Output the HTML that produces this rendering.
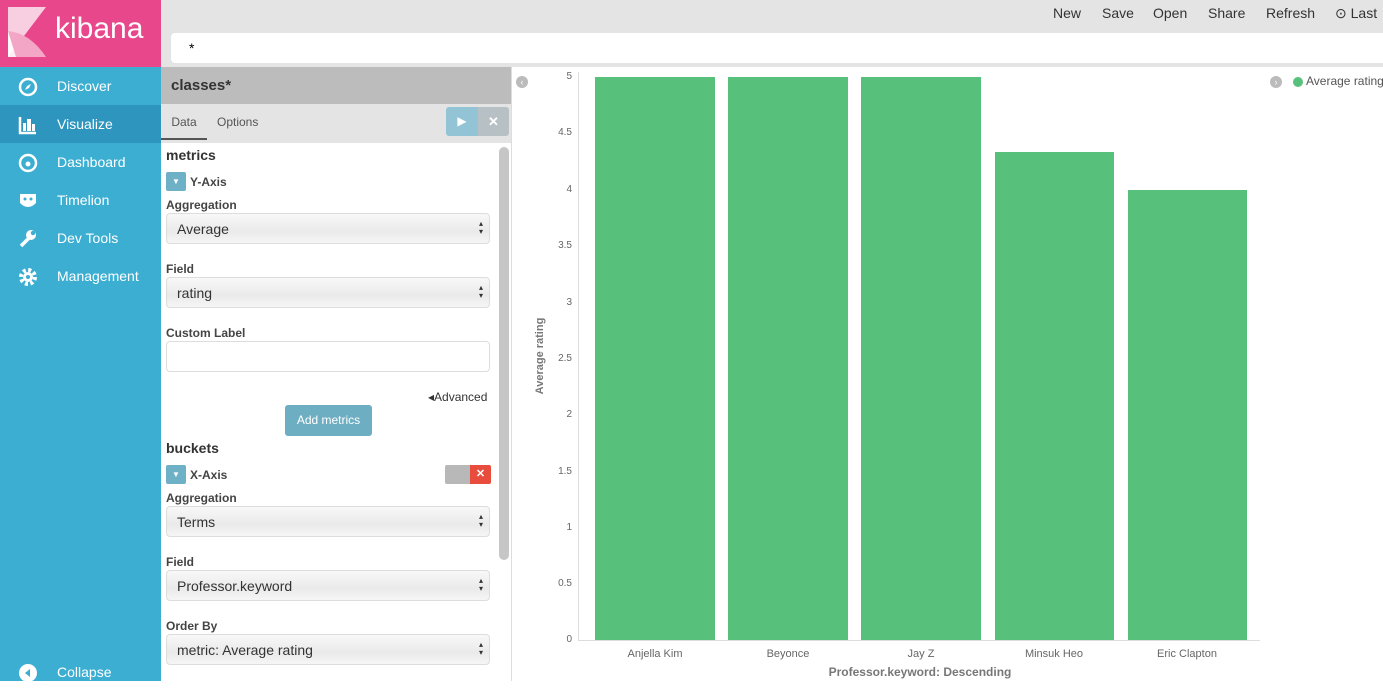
<!DOCTYPE html>
<html><head><style>
*{box-sizing:border-box;margin:0;padding:0}
body{width:1383px;height:681px;overflow:hidden;font-family:"Liberation Sans",sans-serif;background:#fff;position:relative}
.abs{position:absolute}
#side{left:0;top:0;width:161px;height:681px;background:#3caed2}
#logo{left:0;top:0;width:161px;height:67px;background:#e8488b}
.nav{left:0;width:161px;height:38px;color:#fff;font-size:14px;line-height:38px;padding-left:57px}
.nav svg{position:absolute;left:18px;top:10px}
#top{left:161px;top:0;width:1222px;height:67px;background:#e4e4e4}
.menu{top:5px;font-size:14px;color:#333}
.lbl{font-size:12px;font-weight:bold;color:#444;left:166px}
.sel{left:166px;width:324px;height:31px;border:1px solid #ddd;border-radius:4px;background:linear-gradient(#f8f8f8,#eaeaea 60%,#f5f5f5);font-size:14px;color:#333;padding-left:10px;line-height:30px}
.sel:after{content:"▴\A▾";white-space:pre;position:absolute;right:6px;top:6px;font-size:8px;line-height:8px;color:#333}
.yt{left:540px;width:32px;text-align:right;font-size:10px;color:#666}
.bar{background:#57c17b;bottom:41px}
.xl{top:648px;font-size:11px;color:#666;text-align:center;width:130px}
</style></head><body>
<div id="side" class="abs"></div>
<div id="logo" class="abs">
<svg class="abs" style="left:8px;top:7px" width="40" height="50"><polygon points="0,0 38,0 0,50" fill="#f8cfe0"/><polygon points="0,24 30,50 0,50" fill="#fff" opacity=".9"/><path d="M0,24 Q22,26 38,50 L8,50Z" fill="#f4a6c6"/></svg>
<div class="abs" style="left:55px;top:12px;color:#fff;font-size:30px">kibana</div></div>
<div class="abs nav" style="top:67px"><svg width="20" height="20"><circle cx="10" cy="10" r="8" fill="none" stroke="#fff" stroke-width="2.5"/><polygon points="13,7 11,11 7,13 9,9" fill="#fff"/></svg>Discover</div>
<div class="abs nav" style="top:105px;background:#2e95be"><svg width="20" height="20"><path d="M2,2V18H18" stroke="#fff" stroke-width="2.5" fill="none"/><rect x="5" y="8" width="3" height="8" fill="#fff"/><rect x="9" y="4" width="4" height="12" fill="#fff"/><rect x="14" y="9" width="3" height="7" fill="#fff"/></svg>Visualize</div>
<div class="abs nav" style="top:143px"><svg width="20" height="20"><circle cx="10" cy="10" r="8" fill="none" stroke="#fff" stroke-width="2.5"/><circle cx="10" cy="11" r="2.5" fill="#fff"/></svg>Dashboard</div>
<div class="abs nav" style="top:181px"><svg width="20" height="20"><path d="M2,3H18V12Q10,20 2,12Z" fill="#fff"/><circle cx="7" cy="8" r="1.5" fill="#3caed2"/><circle cx="13" cy="8" r="1.5" fill="#3caed2"/></svg>Timelion</div>
<div class="abs nav" style="top:219px"><svg width="20" height="20"><path d="M3,17L11,9" stroke="#fff" stroke-width="3.5"/><circle cx="13" cy="6" r="5" fill="#fff"/><circle cx="15" cy="4" r="2.2" fill="#3caed2"/></svg>Dev Tools</div>
<div class="abs nav" style="top:257px"><svg width="20" height="20"><circle cx="10" cy="10" r="7" fill="none" stroke="#fff" stroke-width="4" stroke-dasharray="3 2.5"/><circle cx="10" cy="10" r="5" fill="#fff"/><circle cx="10" cy="10" r="2" fill="#3caed2"/></svg>Management</div>
<div class="abs nav" style="top:653px"><svg width="20" height="20"><circle cx="10" cy="10" r="9" fill="#fff"/><polygon points="12,6 7,10 12,14" fill="#3caed2"/></svg>Collapse</div>
<div id="top" class="abs"></div>
<div class="abs menu" style="left:1053px">New</div>
<div class="abs menu" style="left:1102px">Save</div>
<div class="abs menu" style="left:1153px">Open</div>
<div class="abs menu" style="left:1208px">Share</div>
<div class="abs menu" style="left:1266px">Refresh</div>
<div class="abs menu" style="left:1335px">⊙ Last</div>
<div class="abs" style="left:171px;top:33px;width:1212px;height:30px;background:#fff;border-radius:4px 0 0 4px;padding:7px 18px;font-size:14px">*</div>
<div class="abs" style="left:161px;top:67px;width:350px;height:38px;background:#bcbcbc;font-size:15px;font-weight:bold;color:#333;padding:10px 10px">classes*</div>
<div class="abs" style="left:161px;top:104px;width:350px;height:39px;background:#e4e4e4"></div>
<div class="abs" style="left:161px;top:115px;width:46px;height:25px;border-bottom:2px solid #555;font-size:12px;color:#555;text-align:center">Data</div>
<div class="abs" style="left:217px;top:115px;font-size:12px;color:#555">Options</div>
<div class="abs" style="left:446px;top:107px;width:32px;height:29px;background:#93c4d6;border-radius:3px 0 0 3px;color:#fff;font-size:12px;text-align:center;line-height:29px">▶</div>
<div class="abs" style="left:478px;top:107px;width:31px;height:29px;background:#b7c1c5;border-radius:0 3px 3px 0;color:#fff;font-size:13px;font-weight:bold;text-align:center;line-height:29px">✕</div>
<div class="abs" style="left:499px;top:147px;width:10px;height:413px;background:#c6c6c6;border-radius:5px"></div>
<div class="abs" style="left:511px;top:67px;width:1px;height:614px;background:#ddd"></div>
<div class="abs" style="left:166px;top:147px;font-size:14px;font-weight:bold;color:#333">metrics</div>
<div class="abs" style="left:166px;top:172px;width:20px;height:19px;background:#6eb0c5;border-radius:2px;color:#fff;font-size:8px;text-align:center;line-height:19px">▼</div>
<div class="abs lbl" style="left:190px;top:175px">Y-Axis</div>
<div class="abs lbl" style="top:198px">Aggregation</div>
<div class="abs sel" style="top:213px">Average</div>
<div class="abs lbl" style="top:262px">Field</div>
<div class="abs sel" style="top:277px">rating</div>
<div class="abs lbl" style="top:326px">Custom Label</div>
<div class="abs" style="left:166px;top:341px;width:324px;height:31px;border:1px solid #ddd;border-radius:4px"></div>
<div class="abs" style="left:428px;top:390px;font-size:12px;color:#333">◂Advanced</div>
<div class="abs" style="left:285px;top:405px;width:87px;height:31px;background:#6eaec3;border-radius:3px;color:#fff;font-size:12px;text-align:center;line-height:31px">Add metrics</div>
<div class="abs" style="left:166px;top:440px;font-size:14px;font-weight:bold;color:#333">buckets</div>
<div class="abs" style="left:166px;top:465px;width:20px;height:19px;background:#6eb0c5;border-radius:2px;color:#fff;font-size:8px;text-align:center;line-height:19px">▼</div>
<div class="abs lbl" style="left:190px;top:468px">X-Axis</div>
<div class="abs" style="left:445px;top:465px;width:25px;height:19px;background:#b8b8b8;border-radius:2px 0 0 2px"></div>
<div class="abs" style="left:470px;top:465px;width:21px;height:19px;background:#e84c3d;border-radius:0 2px 2px 0;color:#fff;font-size:11px;font-weight:bold;text-align:center;line-height:19px">✕</div>
<div class="abs lbl" style="top:491px">Aggregation</div>
<div class="abs sel" style="top:506px">Terms</div>
<div class="abs lbl" style="top:555px">Field</div>
<div class="abs sel" style="top:570px">Professor.keyword</div>
<div class="abs lbl" style="top:619px">Order By</div>
<div class="abs sel" style="top:634px">metric: Average rating</div>
<div class="abs" style="left:516px;top:76px;width:12px;height:12px;border-radius:6px;background:#bbb;color:#fff;font-size:9px;text-align:center;line-height:12px">‹</div>
<div class="abs" style="left:1270px;top:76px;width:12px;height:12px;border-radius:6px;background:#bbb;color:#fff;font-size:9px;text-align:center;line-height:12px">›</div>
<div class="abs" style="left:1293px;top:77px;width:10px;height:10px;border-radius:5px;background:#57c17b"></div>
<div class="abs" style="left:1306px;top:74px;font-size:12px;color:#555;white-space:nowrap">Average rating</div>
<div class="abs" style="left:578px;top:72px;width:1px;height:569px;background:#ddd"></div>
<div class="abs" style="left:578px;top:640px;width:682px;height:1px;background:#ddd"></div>
<div class="abs yt" style="top:71px">5</div><div class="abs yt" style="top:127px">4.5</div><div class="abs yt" style="top:184px">4</div><div class="abs yt" style="top:240px">3.5</div><div class="abs yt" style="top:297px">3</div><div class="abs yt" style="top:353px">2.5</div><div class="abs yt" style="top:409px">2</div><div class="abs yt" style="top:466px">1.5</div><div class="abs yt" style="top:522px">1</div><div class="abs yt" style="top:578px">0.5</div><div class="abs yt" style="top:634px">0</div>
<div class="abs" style="left:490px;top:350px;transform:rotate(-90deg);font-size:11px;font-weight:bold;color:#777;width:100px;text-align:center">Average rating</div>
<div class="abs bar" style="left:595px;width:120px;top:77px"></div>
<div class="abs bar" style="left:728px;width:120px;top:77px"></div>
<div class="abs bar" style="left:861px;width:120px;top:77px"></div>
<div class="abs bar" style="left:995px;width:119px;top:152px"></div>
<div class="abs bar" style="left:1128px;width:119px;top:190px"></div>
<div class="abs xl" style="left:590px">Anjella Kim</div>
<div class="abs xl" style="left:723px">Beyonce</div>
<div class="abs xl" style="left:856px">Jay Z</div>
<div class="abs xl" style="left:989px">Minsuk Heo</div>
<div class="abs xl" style="left:1122px">Eric Clapton</div>
<div class="abs" style="left:760px;top:665px;width:320px;text-align:center;font-size:12px;font-weight:bold;color:#777">Professor.keyword: Descending</div>
</body></html>
